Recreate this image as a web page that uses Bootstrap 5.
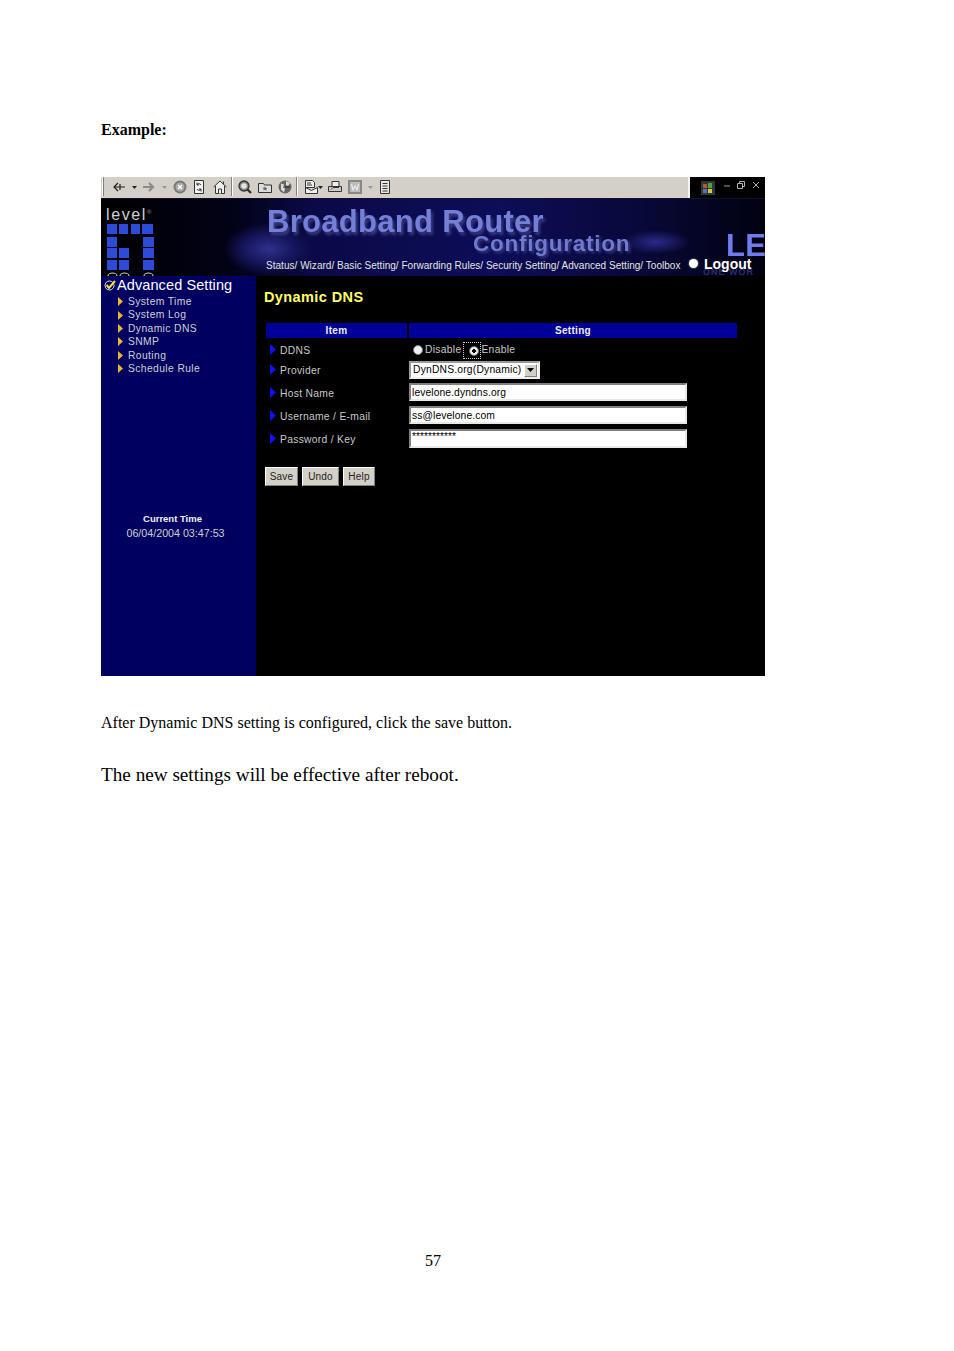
<!DOCTYPE html>
<html lang="en"><head><meta charset="utf-8"><title>Dynamic DNS example</title>
<link rel="stylesheet" href="https://cdn.jsdelivr.net/npm/bootstrap@5.3.0/dist/css/bootstrap.min.css">
<style>
html,body{background:#fff;margin:0}
.doc{width:954px;height:1351px;padding:120px 0 0 101px;font-family:"Liberation Serif",serif;color:#000;overflow:hidden}
.doc p{margin:0}
.ex-title{font-size:16px;font-weight:700;line-height:19px}
.shot{width:664px;height:499px;margin-top:38px;font-family:"Liberation Sans",Arial,sans-serif}
.tb{height:21px;background:#d4d0c8}
.tb-left{width:589px;height:21px;padding:0 0 2px 1px;border-right:2px solid #f4f4f0}
.tb-right{width:75px;height:21px;background:#000;padding-left:11px}
.g4{margin-left:4px}.g5{margin-left:5px}.g6{margin-left:6px}.g7{margin-left:7px}.g8{margin-left:8px}
.up{margin-bottom:6px}
.banner{height:78px;position:relative;overflow:hidden;background:radial-gradient(ellipse 45px 26px at 168px 50px,#30308a 0,#16165e 55%,transparent 100%),radial-gradient(ellipse 34px 12px at 555px 43px,#2a2a8a 0,transparent 100%),linear-gradient(90deg,#000 0,#020218 20%,#0a0a48 32%,#0d0d58 60%,#080838 82%,#010110 100%);border-top:1px solid #101030}
.logo{position:absolute;left:0;top:0}
.level{position:absolute;left:5px;top:7px;font-size:16px;line-height:18px;letter-spacing:1.6px;color:#cfcfcf}
.level sup{font-size:6px;top:-1em;letter-spacing:0;color:#999}
.bb{position:absolute;left:166px;top:11px;font-size:31px;line-height:24px;font-weight:700;color:#7480d8;letter-spacing:.3px;text-shadow:2px 3px 3px #3c3c80;white-space:nowrap;filter:blur(.4px)}
.cf{position:absolute;left:372px;top:35px;font-size:22.5px;line-height:20px;font-weight:700;color:#6f7ad0;letter-spacing:.75px;text-shadow:2px 2px 3px #3c3c80;white-space:nowrap;filter:blur(.4px)}
.crumbs{position:absolute;left:165px;top:60px;font-size:10px;line-height:14px;color:#e4e4e4;white-space:nowrap;letter-spacing:.03px}
.le{position:absolute;left:625px;top:35px;font-size:31px;line-height:24px;font-weight:700;color:#6f7cf0;white-space:nowrap;letter-spacing:.2px;filter:blur(.3px)}
.onew{position:absolute;left:602px;top:70px;font-size:9px;line-height:7px;font-weight:700;color:#2c2c70;letter-spacing:1px;white-space:nowrap}
.logout{position:absolute;left:588px;top:60px;gap:6px;color:#fff;font-size:14px;line-height:8px;font-weight:700}
.dot-w{width:9px;height:9px;border-radius:50%;background:#fff;box-shadow:0 0 2px #aac}
.body-row{height:400px}
.side{width:155px;background:#000060;color:#d0d0d0;padding:1px 0 0 3px}
.side-head{font-size:14.5px;line-height:16px;color:#fff;gap:1px;letter-spacing:.1px}
.side-list{margin:2px 0 0 14px;padding:0;list-style:none;font-size:10.3px;line-height:13.400px;letter-spacing:.4px}
.side-list li{gap:5px}
.clock{margin-top:137px;margin-left:-3px;text-align:center;font-size:10.700px;line-height:14px;white-space:nowrap}
.clock strong{display:block;color:#f0f0f0;font-weight:700;font-size:9.500px;width:143px}
.clock span{display:block;width:149px}
.pane{width:509px;background:#000;padding:12px 0 0 8px;color:#c8c8c8;font-size:10.3px;letter-spacing:.3px}
.pane-title{font-size:14.5px;line-height:18px;font-weight:700;color:#ffff66;letter-spacing:.4px;margin:0}
.grid-form{display:grid;grid-template-columns:141px 328px;column-gap:2px;margin:17px 0 0 2px}
.hcell{height:15px;background:#000099;color:#eee;font-weight:700;text-align:center;line-height:15px;font-size:10px}
.lab{gap:4px;padding:0 0 3px 4px}
.lab-first{gap:4px;padding:3px 0 0 4px}
.tri{margin-bottom:4px}
.cell{height:23px}
.radio-w{width:10px;height:10px;border-radius:50%;background:#f0f0f0;border:1px solid #777}
.radio-on{background:radial-gradient(circle,#000 0,#000 30%,#eee 36%);}
.lbl-dis{margin-left:2px}
.focus{border:1px dotted #ccc;padding:3px 1px 2px 5px;margin-left:2px}
.row-radio{padding-top:1px}
.sel{width:131px;height:18px;background:#fff;border:2px solid #999;border-right-color:#eee;border-bottom-color:#eee;color:#000;padding-left:2px;line-height:14px;font-size:10.3px;letter-spacing:.2px}
.sel-btn{width:13px;height:13px;background:#d4d0c8;border:1px solid #808080;border-left-color:#fff;border-top-color:#fff;margin-right:1px}
.in{width:278px;height:18px;margin-top:-1px;background:#fff;border:2px solid #808080;border-right-color:#e8e8e8;border-bottom-color:#e8e8e8;border-radius:0;color:#000;padding:0 1px;font:10.3px/14px "Liberation Sans",Arial,sans-serif;letter-spacing:.1px;display:block}
.in-pw{letter-spacing:0;line-height:10px;padding-bottom:4px;height:19px}
.acts{gap:4px;margin:14px 0 0 1px}
.acts .btn{background:#d4d0c8;color:#222;border:1px solid #808080;border-top-color:#fff;border-left-color:#fff;border-radius:0;padding:0;height:19px;font-size:10px;line-height:16px;letter-spacing:.2px}
.w33{width:33px}.w37{width:37px}.w32{width:32px}
.after{font-size:16px;line-height:18px;margin-top:38px!important}
.reboot{font-size:19.200px;line-height:22px;margin-top:32px!important}
.pgno{font-size:16px;line-height:18px;margin-top:466px!important;margin-left:324px!important}
</style></head>
<body>
<div class="doc">
<p class="ex-title">Example:</p>
<div class="shot">
  <div class="tb d-flex">
    <div class="tb-left d-flex align-items-center">
      <svg width="3" height="19" viewBox="0 0 3 19"><path d="M0 0h1v19H0z" fill="#fff"/><path d="M1 0h1v19H1z" fill="#808080"/></svg>
      <svg class="g7" width="14" height="14" viewBox="0 0 14 14" fill="none" stroke="#222" stroke-width="1.200"><path d="M13 7H2M6 3 2 7l4 4"/><path d="M8 4v6"/></svg>
      <svg class="g6" width="5" height="14" viewBox="0 0 5 14"><path d="M0 6h5L2.500 9z" fill="#222"/></svg>
      <svg class="g5" width="14" height="14" viewBox="0 0 14 14" fill="none" stroke="#8a8a8a" stroke-width="2.200"><path d="M1 7h10M7 3l4 4-4 4"/></svg>
      <svg class="g6" width="5" height="14" viewBox="0 0 5 14"><path d="M0 6h5L2.500 9z" fill="#999"/></svg>
      <svg class="g6" width="14" height="14" viewBox="0 0 14 14"><circle cx="7" cy="7" r="6.500" fill="#777"/><circle cx="7" cy="7" r="4.500" fill="#aaa"/><path d="M5 5l4 4M9 5l-4 4" stroke="#fff" stroke-width="1.300"/></svg>
      <svg class="g5" width="14" height="14" viewBox="0 0 14 14" fill="#f4f4f4" stroke="#333"><path d="M2.500.5h9v13h-9z"/><path d="M9 5a2.500 2.500 0 0 0-4-.5M5 9a2.500 2.500 0 0 0 4 .5" fill="none"/><path d="M5 2.500v2.500h2M9 11.500V9H7" fill="none"/></svg>
      <svg class="g7" width="14" height="14" viewBox="0 0 14 14" fill="#eee" stroke="#333"><path d="M.5 7 7 1l6.500 6"/><path d="M2.500 6v7.500h9V6"/><path d="M5.500 13.500V9h3v4.500M10.500 1.500v3"/></svg>
      <svg class="g4" width="2" height="19" viewBox="0 0 2 19"><path d="M0 0h1v19H0z" fill="#808080"/><path d="M1 0h1v19H1z" fill="#fff"/></svg>
      <svg class="g5" width="14" height="14" viewBox="0 0 14 14" stroke="#333"><circle cx="6" cy="6" r="5" fill="#888" stroke-width="1.300"/><circle cx="6" cy="6" r="2.800" fill="#e4e4e4" stroke="none"/><path d="M9.500 9.500l3.500 3.500" stroke-width="2.400"/></svg>
      <svg class="g6" width="14" height="14" viewBox="0 0 14 14" fill="#ddd" stroke="#333"><path d="M.5 3.500h5l1 1.500h7v7.500H.5z"/><path d="M7 6.500l.8 1.500 1.700.2-1.200 1.100.3 1.700L7 9.700l-1.600.8.300-1.700-1.200-1.100 1.700-.2z" fill="#666" stroke="none"/></svg>
      <svg class="g6" width="14" height="14" viewBox="0 0 14 14"><circle cx="7" cy="7" r="6.500" fill="#666"/><path d="M3 3.500l3 1-1 3 2 1-1 4-3-3zM8 1l4 2-2 3-2-1z" fill="#ddd"/><path d="M7 7h5" stroke="#222"/></svg>
      <svg class="g4" width="2" height="19" viewBox="0 0 2 19"><path d="M0 0h1v19H0z" fill="#808080"/><path d="M1 0h1v19H1z" fill="#fff"/></svg>
      <svg class="g6" width="14" height="14" viewBox="0 0 14 14" fill="#eee" stroke="#333"><path d="M1.500.5h7l2 2v5h-9zM1.500 7.500v6h12v-6l-6 3z"/><path d="M3 3h4M3 5h5" fill="none"/></svg>
      <svg width="5" height="14" viewBox="0 0 5 14"><path d="M0 6h5L2.500 9z" fill="#222"/></svg>
      <svg class="g5" width="14" height="14" viewBox="0 0 14 14" fill="#ccc" stroke="#333"><path d="M4 6V1.500h7V6" fill="#eee"/><path d="M.5 6.500h13v5H.5z"/><path d="M3 9.500l2-2h6"/></svg>
      <svg class="g6" width="14" height="14" viewBox="0 0 14 14"><path d="M0 0h14v14H0z" fill="#888"/><path d="M2 2h10v10H2z" fill="#bbb"/><path d="M3.500 4l1.500 6 2-4 2 4 1.500-6" fill="none" stroke="#eee" stroke-width="1.100"/></svg>
      <svg class="g6" width="5" height="14" viewBox="0 0 5 14"><path d="M0 6h5L2.500 9z" fill="#999"/></svg>
      <svg class="g5" width="14" height="14" viewBox="0 0 14 14" fill="#e8e8e8" stroke="#333"><path d="M2.500.5h9v13h-9z"/><path d="M4.500 3.500h5M4.500 6h5M4.500 8.500h5M4.500 11h5" fill="none"/></svg>
    </div>
    <div class="tb-right d-flex align-items-center">
      <svg width="14" height="14" viewBox="0 0 14 14"><path d="M0 0h14v14H0z" fill="#2c3a30"/><path d="M2 3h4v4H2z" fill="#c85030"/><path d="M7 2h4v5H7z" fill="#50a050"/><path d="M2 8h4v4H2z" fill="#5070d0"/><path d="M7 8h4v4H7z" fill="#e0c040"/></svg>
      <svg class="g8 up" width="8" height="10" viewBox="0 0 8 10"><path d="M1 6h6" stroke="#9a9a9a"/></svg>
      <svg class="g6 up" width="8" height="10" viewBox="0 0 8 10" fill="none" stroke="#b0b0b0"><path d="M.5 3.500h5v5h-5zM2.500 3V1.500h5v5H6"/></svg>
      <svg class="g7 up" width="8" height="10" viewBox="0 0 8 10" fill="none" stroke="#b0b0b0"><path d="M1 2l6 6M7 2 1 8"/></svg>
    </div>
  </div>
  <div class="banner">
    <svg class="logo" width="60" height="78" viewBox="0 0 60 78" fill="#2b4bd8">
      <path d="M6 25h10v10H6zM18 25h9v10h-9zM30 25h9v10h-9zM41 25h11v10H41zM6 38h10v10H6zM42 38h11v10H42zM6 49h10v10H6zM18 49h10v10H18zM42 49h11v10H42zM6 61h10v10H6zM18 61h10v10H18zM42 61h11v10H42z"/>
      <path d="M7 77a4.500 3 0 0 1 9 0M19 77a4.500 3 0 0 1 9 0M43 77a4.500 3 0 0 1 9 0" fill="none" stroke="#ccc" stroke-width="1.200"/>
    </svg>
    <span class="level">level<sup>®</sup></span>
    <span class="bb">Broadband Router</span>
    <span class="cf">Configuration</span>
    <span class="crumbs">Status/ Wizard/ Basic Setting/ Forwarding Rules/ Security Setting/ Advanced Setting/ Toolbox</span>
    <span class="le">LE</span>
    <span class="onew">ONE WOR</span>
    <div class="logout d-flex align-items-center"><span class="dot-w"></span><span>Logout</span></div>
  </div>
  <div class="body-row d-flex">
    <aside class="side">
      <div class="side-head d-flex align-items-center">
        <svg width="12" height="11" viewBox="0 0 12 11"><circle cx="5.500" cy="5.500" r="4.500" fill="#000060" stroke="#e0e0e0"/><path d="M2.500 5l2.500 3L11 1" fill="none" stroke="#f0e040" stroke-width="2"/></svg>
        <span>Advanced Setting</span>
      </div>
      <ul class="side-list">
        <li class="d-flex align-items-center"><svg width="5" height="9" viewBox="0 0 5 9"><path d="M0 0l5 4.500L0 9z" fill="#e8b830"/></svg><span>System Time</span></li>
        <li class="d-flex align-items-center"><svg width="5" height="9" viewBox="0 0 5 9"><path d="M0 0l5 4.500L0 9z" fill="#e8b830"/></svg><span>System Log</span></li>
        <li class="d-flex align-items-center"><svg width="5" height="9" viewBox="0 0 5 9"><path d="M0 0l5 4.500L0 9z" fill="#e8b830"/></svg><span>Dynamic DNS</span></li>
        <li class="d-flex align-items-center"><svg width="5" height="9" viewBox="0 0 5 9"><path d="M0 0l5 4.500L0 9z" fill="#e8b830"/></svg><span>SNMP</span></li>
        <li class="d-flex align-items-center"><svg width="5" height="9" viewBox="0 0 5 9"><path d="M0 0l5 4.500L0 9z" fill="#e8b830"/></svg><span>Routing</span></li>
        <li class="d-flex align-items-center"><svg width="5" height="9" viewBox="0 0 5 9"><path d="M0 0l5 4.500L0 9z" fill="#e8b830"/></svg><span>Schedule Rule</span></li>
      </ul>
      <div class="clock"><strong>Current Time</strong><span>06/04/2004 03:47:53</span></div>
    </aside>
    <main class="pane">
      <h1 class="pane-title">Dynamic DNS</h1>
      <div class="grid-form">
        <div class="hcell">Item</div><div class="hcell">Setting</div>
        <div class="lab-first cell d-flex align-items-center"><svg class="tri" width="6" height="11" viewBox="0 0 6 11"><path d="M0 0l6 5.500L0 11z" fill="#1010f0"/></svg><span>DDNS</span></div>
        <div class="cell row-radio d-flex align-items-center"><span class="radio-w ms-1"></span><span class="lbl-dis">Disable</span><span class="focus d-flex"><span class="radio-w radio-on"></span></span><span>Enable</span></div>
        <div class="lab cell d-flex align-items-center"><svg class="tri" width="6" height="11" viewBox="0 0 6 11"><path d="M0 0l6 5.500L0 11z" fill="#1010f0"/></svg><span>Provider</span></div>
        <div class="cell"><div class="sel d-flex justify-content-between align-items-center"><span>DynDNS.org(Dynamic)</span><span class="sel-btn d-flex align-items-center justify-content-center"><svg width="7" height="4" viewBox="0 0 7 4"><path d="M0 0h7L3.500 4z" fill="#000"/></svg></span></div></div>
        <div class="lab cell d-flex align-items-center"><svg class="tri" width="6" height="11" viewBox="0 0 6 11"><path d="M0 0l6 5.500L0 11z" fill="#1010f0"/></svg><span>Host Name</span></div>
        <div class="cell"><input class="in" type="text" value="levelone.dyndns.org"></div>
        <div class="lab cell d-flex align-items-center"><svg class="tri" width="6" height="11" viewBox="0 0 6 11"><path d="M0 0l6 5.500L0 11z" fill="#1010f0"/></svg><span>Username / E-mail</span></div>
        <div class="cell"><input class="in" type="text" value="ss@levelone.com"></div>
        <div class="lab cell d-flex align-items-center"><svg class="tri" width="6" height="11" viewBox="0 0 6 11"><path d="M0 0l6 5.500L0 11z" fill="#1010f0"/></svg><span>Password / Key</span></div>
        <div class="cell"><input class="in in-pw" type="text" value="***********"></div>
      </div>
      <div class="acts d-flex">
        <button class="btn w33" type="button">Save</button>
        <button class="btn w37" type="button">Undo</button>
        <button class="btn w32" type="button">Help</button>
      </div>
    </main>
  </div>
</div>
<p class="after">After Dynamic DNS setting is configured, click the save button.</p>
<p class="reboot">The new settings will be effective after reboot.</p>
<p class="pgno">57</p>
</div>
<script src="https://cdn.jsdelivr.net/npm/bootstrap@5.3.0/dist/js/bootstrap.bundle.min.js"></script>
</body></html>
